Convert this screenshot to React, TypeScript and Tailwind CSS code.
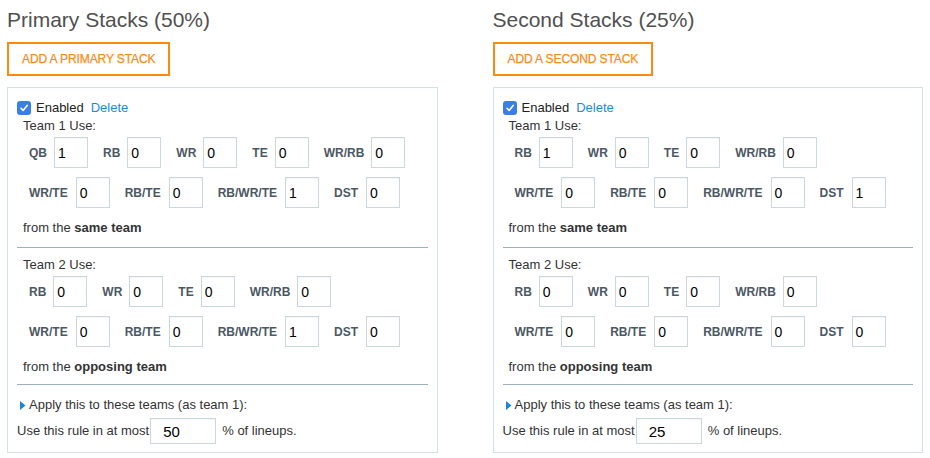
import React from "react";

type Field = [string, string];

const Input = ({ value, cls = "" }: { value: string; cls?: string }) => (
  <div className={`w-[34px] h-[31px] border border-[#cbd7df] bg-white flex items-center shadow-[inset_0_1px_1px_rgba(0,0,0,0.04)] ${cls}`}>
    <span className="text-[14px] text-black leading-none">{value}</span>
  </div>
);

const FieldRow = ({ fields, cls = "", inner }: { fields: Field[]; cls?: string; inner: string }) => (
  <div className={`flex items-center gap-[15px] pl-[12px] ${cls}`}>
    {fields.map(([label, value], i) => (
      <div key={i} className={`flex items-center ${inner}`}>
        <span className="text-[12px] font-bold text-[#4b5863]">{label}</span>
        <Input value={value} cls="pl-[3px]" />
      </div>
    ))}
  </div>
);

const Team = ({ title, rows, suffix }: { title: string; rows: [Field[], Field[]]; suffix: string }) => (
  <div>
    <div className="h-[18px] leading-[18px] pl-[6px] text-[13px] text-[#333]">{title}</div>
    <FieldRow fields={rows[0]} cls="mt-[2px]" inner="gap-[7px]" />
    <FieldRow fields={rows[1]} cls="mt-[9px]" inner="gap-[8px]" />
    <div className="mt-[11px] h-[18px] leading-[18px] pl-[6px] text-[13px] text-[#333]">
      from the <span className="font-bold">{suffix}</span>
    </div>
  </div>
);

const Column = ({
  title,
  button,
  team1,
  team2,
  pct,
}: {
  title: string;
  button: string;
  team1: [Field[], Field[]];
  team2: [Field[], Field[]];
  pct: string;
}) => (
  <div className="flex flex-col">
    <div className="mt-[5px] leading-[30px] text-[21px] text-[#505050] font-light">{title}</div>
    <div className="mt-[7px] flex">
      <div className="h-[34px] border-2 border-[#fb8a10] px-[13px] flex items-center">
        <span className="text-[12px] text-[#f98c14] tracking-[-0.1px] [-webkit-text-stroke:0.25px_#f98c14]">{button}</span>
      </div>
    </div>
    <div className="mt-[11px] border border-[#d4e0e7] px-[9px] pt-[11px] pb-[8px]">
      <div className="h-[18px] flex items-center text-[13px]">
        <div className="w-[14px] h-[14px] rounded-[3px] bg-[#3a7fe6] flex items-center justify-center">
          <svg width="10" height="10" viewBox="0 0 10 10">
            <path d="M2 5.3 L4.1 7.4 L8.2 2.4" fill="none" stroke="white" strokeWidth="1.6" strokeLinecap="round" strokeLinejoin="round" />
          </svg>
        </div>
        <span className="ml-[5px] text-[#222]">Enabled</span>
        <span className="ml-[7px] text-[#1a8dd8]">Delete</span>
      </div>
      <Team title="Team 1 Use:" rows={team1} suffix="same team" />
      <div className="mt-[10px] h-px bg-[#9db0bd]" />
      <div className="mt-[8px]">
        <Team title="Team 2 Use:" rows={team2} suffix="opposing team" />
      </div>
      <div className="mt-[8px] h-px bg-[#9db0bd]" />
      <div className="mt-[11px] h-[18px] flex items-center text-[13px] text-[#333]">
        <svg width="6" height="9" viewBox="0 0 6 9" className="ml-[3px]">
          <path d="M0 0 L5.5 4.5 L0 9 Z" fill="#1a84d6" />
        </svg>
        <span className="ml-[3px]">Apply this to these teams (as team 1):</span>
      </div>
      <div className="mt-[4px] flex items-center text-[13px] text-[#333]">
        <span>Use this rule in at most</span>
        <div className="ml-[1px] w-[66px] h-[26px] border border-[#cbd7df] bg-white flex items-center pl-[12px] shadow-[inset_0_1px_1px_rgba(0,0,0,0.04)]">
          <span className="text-[15px] text-black leading-none">{pct}</span>
        </div>
        <span className="ml-[6px]">% of lineups.</span>
      </div>
    </div>
  </div>
);

export default function App() {
  return (
    <div className="w-[930px] h-[458px] bg-white overflow-hidden px-[7px]" style={{ fontFamily: '"Liberation Sans", Arial, sans-serif' }}>
      <div className="grid grid-cols-2 gap-x-[55px]">
        <Column
          title="Primary Stacks (50%)"
          button="ADD A PRIMARY STACK"
          team1={[
            [["QB", "1"], ["RB", "0"], ["WR", "0"], ["TE", "0"], ["WR/RB", "0"]],
            [["WR/TE", "0"], ["RB/TE", "0"], ["RB/WR/TE", "1"], ["DST", "0"]],
          ]}
          team2={[
            [["RB", "0"], ["WR", "0"], ["TE", "0"], ["WR/RB", "0"]],
            [["WR/TE", "0"], ["RB/TE", "0"], ["RB/WR/TE", "1"], ["DST", "0"]],
          ]}
          pct="50"
        />
        <Column
          title="Second Stacks (25%)"
          button="ADD A SECOND STACK"
          team1={[
            [["RB", "1"], ["WR", "0"], ["TE", "0"], ["WR/RB", "0"]],
            [["WR/TE", "0"], ["RB/TE", "0"], ["RB/WR/TE", "0"], ["DST", "1"]],
          ]}
          team2={[
            [["RB", "0"], ["WR", "0"], ["TE", "0"], ["WR/RB", "0"]],
            [["WR/TE", "0"], ["RB/TE", "0"], ["RB/WR/TE", "0"], ["DST", "0"]],
          ]}
          pct="25"
        />
      </div>
    </div>
  );
}
